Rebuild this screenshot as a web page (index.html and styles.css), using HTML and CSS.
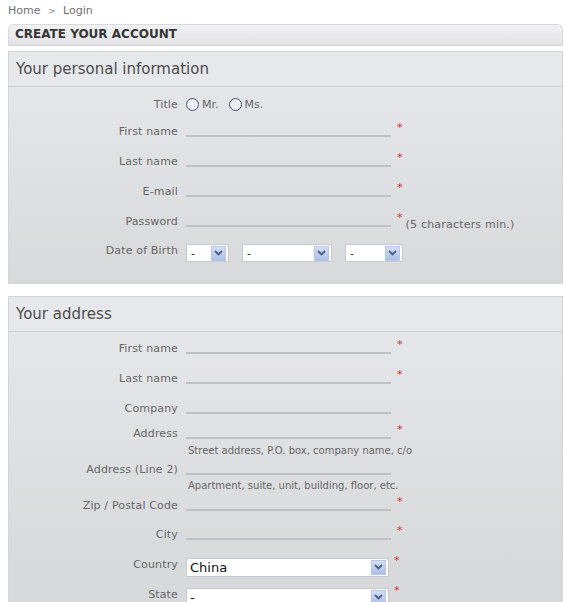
FILE: index.html
```html
<!DOCTYPE html>
<html>
<head>
<meta charset="utf-8">
<link rel="stylesheet" href="styles.css">
</head>
<body>
<div class="page">
  <div class="crumb">Home <span class="sep">&gt;</span> Login</div>
  <h1 class="heading">CREATE YOUR ACCOUNT</h1>

  <div class="box box-personal">
    <div class="legend">Your personal information</div>
    <div class="body body-personal">
      <div class="row row-title">
        <span class="label">Title</span>
        <span class="radios">
          <span class="radio"></span><span class="rlabel">Mr.</span>
          <span class="radio"></span><span class="rlabel">Ms.</span>
        </span>
      </div>
      <div class="row"><span class="label">First name</span><span class="input"></span><span class="req">*</span></div>
      <div class="row"><span class="label">Last name</span><span class="input"></span><span class="req">*</span></div>
      <div class="row"><span class="label">E-mail</span><span class="input"></span><span class="req">*</span></div>
      <div class="row"><span class="label">Password</span><span class="input"></span><span class="req">*</span><span class="note">(5 characters min.)</span></div>
      <div class="row row-dob">
        <span class="label">Date of Birth</span>
        <span class="selects">
          <span class="select sel-day"><span class="val">-</span><span class="arrow"><svg width="9" height="6" viewBox="0 0 9 6"><path d="M1 1 L4.5 4.5 L8 1" fill="none" stroke="#4a5f86" stroke-width="1.8"/></svg></span></span>
          <span class="select sel-month"><span class="val">-</span><span class="arrow"><svg width="9" height="6" viewBox="0 0 9 6"><path d="M1 1 L4.5 4.5 L8 1" fill="none" stroke="#4a5f86" stroke-width="1.8"/></svg></span></span>
          <span class="select sel-year"><span class="val">-</span><span class="arrow"><svg width="9" height="6" viewBox="0 0 9 6"><path d="M1 1 L4.5 4.5 L8 1" fill="none" stroke="#4a5f86" stroke-width="1.8"/></svg></span></span>
        </span>
      </div>
    </div>
  </div>

  <div class="box box-address">
    <div class="legend">Your address</div>
    <div class="body body-address">
      <div class="row"><span class="label">First name</span><span class="input"></span><span class="req">*</span></div>
      <div class="row"><span class="label">Last name</span><span class="input"></span><span class="req">*</span></div>
      <div class="row"><span class="label">Company</span><span class="input"></span></div>
      <div class="row row-short"><span class="label">Address</span><span class="input"></span><span class="req">*</span></div>
      <div class="help help-1">Street address, P.O. box, company name, c/o</div>
      <div class="row row-short"><span class="label">Address (Line 2)</span><span class="input"></span></div>
      <div class="help help-2">Apartment, suite, unit, building, floor, etc.</div>
      <div class="row row-zip"><span class="label">Zip / Postal Code</span><span class="input"></span><span class="req">*</span></div>
      <div class="row row-city"><span class="label">City</span><span class="input"></span><span class="req">*</span></div>
      <div class="row row-select"><span class="label">Country</span><span class="select sel-wide"><span class="val big">China</span><span class="arrow"><svg width="9" height="6" viewBox="0 0 9 6"><path d="M1 1 L4.5 4.5 L8 1" fill="none" stroke="#4a5f86" stroke-width="1.8"/></svg></span></span><span class="req">*</span></div>
      <div class="row row-select"><span class="label">State</span><span class="select sel-wide"><span class="val big">-</span><span class="arrow"><svg width="9" height="6" viewBox="0 0 9 6"><path d="M1 1 L4.5 4.5 L8 1" fill="none" stroke="#4a5f86" stroke-width="1.8"/></svg></span></span><span class="req">*</span></div>
    </div>
  </div>
</div>
</body>
</html>
```

FILE: styles.css
```css
html, body {
  margin: 0;
  padding: 0;
  background: #ffffff;
}
body {
  font-family: "DejaVu Sans", Verdana, sans-serif;
  font-size: 11px;
  color: #666;
  overflow: hidden;
}
.page {
  margin-left: 8px;
  width: 555px;
}
.crumb {
  height: 24px;
  line-height: 22px;
  color: #6f6f6f;
  font-size: 11px;
}
.crumb .sep {
  font-size: 9px;
  margin: 0 4px;
  color: #888;
}
.heading {
  margin: 0;
  height: 20px;
  line-height: 19px;
  border: 1px solid #d9dadc;
  border-bottom-color: #d2d3d5;
  border-radius: 6px 6px 0 0;
  background: linear-gradient(#f2f2f3, #e2e3e5);
  font-size: 12px;
  font-weight: bold;
  color: #353535;
  padding-left: 6px;
  box-sizing: content-box;
}
.box {
  border: 1px solid #d3d4d7;
  border-bottom: none;
  background: linear-gradient(#e7e8eb, #d8d9db);
}
.box-personal {
  margin-top: 5px;
  height: 232px;
}
.box-address {
  margin-top: 12px;
  height: 320px;
  background: linear-gradient(#e7e8eb, #d8d9db 270px);
}
.legend {
  height: 34px;
  line-height: 34px;
  border-bottom: 1px solid #cdced1;
  background: #e7e8eb;
  font-size: 15px;
  color: #4d4d4d;
  padding-left: 7px;
}
.body-personal {
  padding-top: 7px;
}
.body-address {
  padding-top: 1px;
}
.row {
  display: flex;
  align-items: center;
  height: 30px;
}
.row-title {
  height: 20px;
  margin-bottom: 2px;
}
.row-short {
  height: 20px;
}
.row-zip {
  height: 24px;
}
.row-city {
  height: 34px;
}
.label {
  width: 169px;
  text-align: right;
  flex: none;
  margin-right: 8px;
  color: #666;
  letter-spacing: 0.15px;
}
.row-dob .label {
  align-self: flex-start;
  margin-top: 8px;
}
.row-select .label {
  align-self: flex-start;
  margin-top: 7px;
}
.input {
  display: block;
  width: 205px;
  height: 9px;
  border-bottom: 2px solid #bdc0c4;
  flex: none;
}
.req {
  color: #d0302b;
  font-size: 11px;
  align-self: flex-start;
  margin-top: 5px;
  margin-left: 6px;
  line-height: 14px;
}
.row-select .req {
  margin-top: 3px;
  margin-left: 5px;
}
.row-short .req {
  margin-top: 0;
}
.row-zip .req {
  margin-top: 2px;
}
.row-city .req {
  margin-top: 7px;
}
.note {
  margin-left: 3px;
  margin-top: 6px;
  color: #666;
  letter-spacing: 0.2px;
}
.radios {
  display: flex;
  align-items: center;
}
.radio {
  width: 11px;
  height: 11px;
  border: 1px solid #3c4f6f;
  border-radius: 50%;
  background: #eef0f3;
  margin-right: 3px;
}
.rlabel {
  margin-right: 10px;
  color: #666;
}
.selects {
  display: flex;
  gap: 13px;
  margin-top: 4px;
}
.select {
  display: flex;
  align-items: center;
  justify-content: space-between;
  height: 16px;
  border: 1px solid #c6cad0;
  background: #fff;
  box-sizing: content-box;
  flex: none;
}
.sel-day { width: 41px; }
.sel-month { width: 88px; }
.sel-year { width: 56px; }
.sel-wide {
  width: 201px;
  height: 17px;
  margin-top: 2px;
}
.val {
  color: #222;
  padding-left: 4px;
  font-size: 11px;
}
.val.big {
  font-size: 13px;
  color: #111;
  padding-left: 3px;
  margin-top: 1px;
}
.arrow {
  width: 13px;
  height: 13px;
  margin-right: 2px;
  border: 1px solid #b8c7e6;
  background: linear-gradient(#d3def6, #aebfe6);
  display: flex;
  align-items: center;
  justify-content: center;
}
.help {
  padding-left: 179px;
  font-size: 10px;
  color: #666;
}
.help-1 {
  height: 16px;
  line-height: 16px;
}
.help-2 {
  height: 14px;
  line-height: 14px;
}
```
